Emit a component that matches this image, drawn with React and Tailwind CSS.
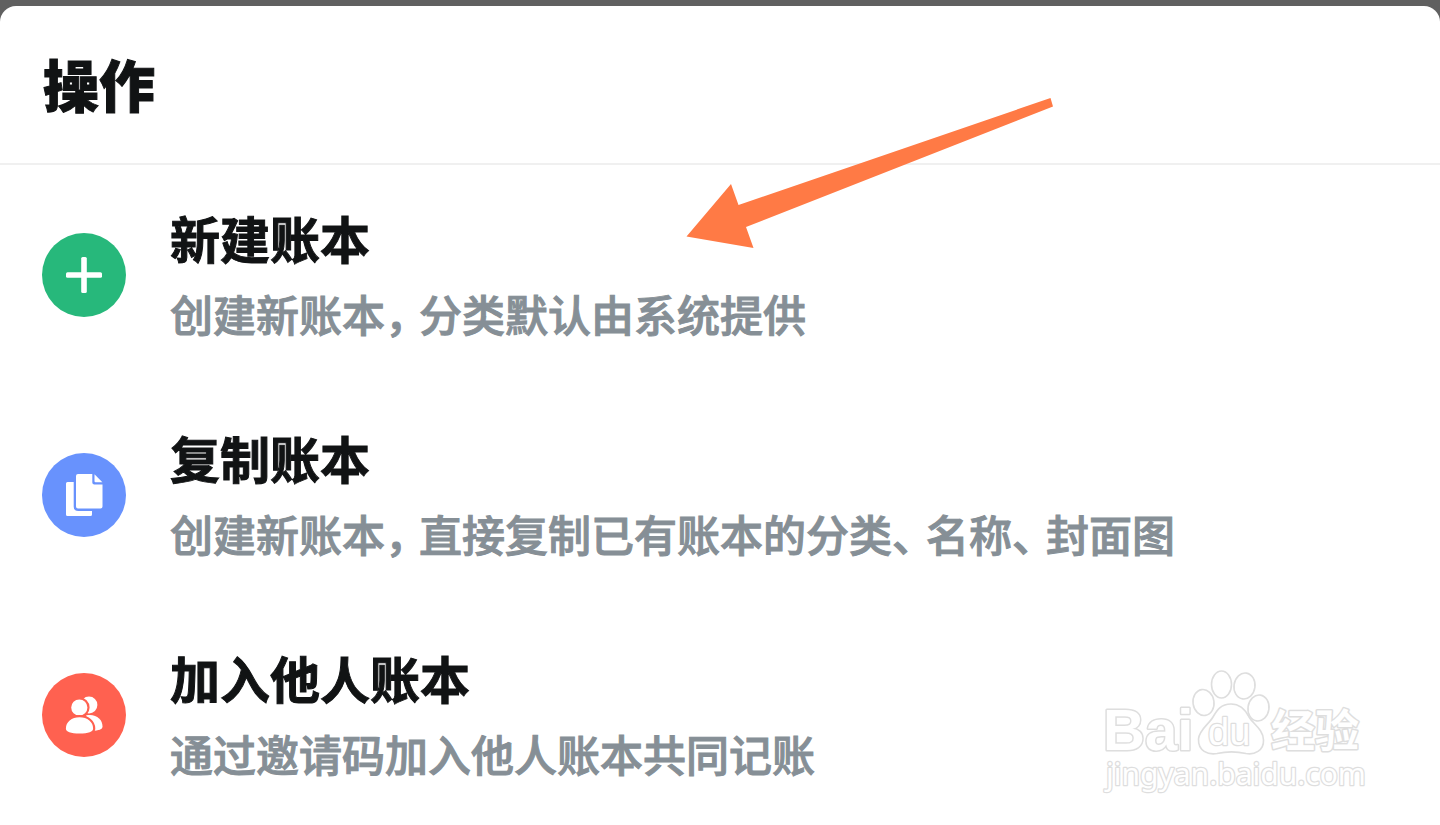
import React from "react";

const PUNCTUATION = /([，、])/;

function PlusIcon() {
  return (
    <svg viewBox="0 0 84 84" className="size-full" aria-hidden="true">
      <rect x="24" y="39.2" width="36" height="5.6" rx="1.5" fill="#fff" />
      <rect x="39.2" y="24" width="5.6" height="36" rx="1.5" fill="#fff" />
    </svg>
  );
}

function CopyIcon() {
  return (
    <svg viewBox="0 0 84 84" className="size-full" aria-hidden="true">
      <path
        fill="#fff"
        d="M25.500 29H31.700V53.500Q31.700 58 36.200 58H50V61.500Q50 63 48.500 63H25.500Q24 63 24 61.500V30.500Q24 29 25.500 29Z"
      />
      <path
        fill="#fff"
        d="M36 21H50.300V29.500Q50.300 31.500 52.300 31.500H60.500V53.500Q60.500 55.500 58.500 55.500H36Q34 55.500 34 53.500V23Q34 21 36 21Z"
      />
      <path fill="#fff" d="M52.500 21.300L60.400 29.200H53.500Q52.500 29.200 52.500 28.200Z" />
    </svg>
  );
}

function PeopleIcon() {
  return (
    <svg viewBox="0 0 84 84" className="size-full" aria-hidden="true">
      <g fill="#fff">
        <circle cx="47" cy="32" r="8.400" />
        <path d="M44 42.500C54 40.500 60.500 46.500 60.500 53.500C60.500 56.500 57 57.500 50 57.800Z" />
      </g>
      <g fill="#fff" stroke="#ff6150" strokeWidth="2.200">
        <circle cx="37.300" cy="34.500" r="9.200" />
        <path d="M37.500 43.200C46 43.200 52.200 48.500 52.200 55.500C52.200 60 46 61.600 37.500 61.600C29 61.600 22.800 60 22.800 55.500C22.800 48.500 29 43.200 37.500 43.200Z" />
      </g>
    </svg>
  );
}

const ACTIONS = [
  {
    title: "新建账本",
    description: "创建新账本，分类默认由系统提供",
    badge: "bg-[#27b87b]",
    Icon: PlusIcon,
  },
  {
    title: "复制账本",
    description: "创建新账本，直接复制已有账本的分类、名称、封面图",
    badge: "bg-[#6892fd]",
    Icon: CopyIcon,
  },
  {
    title: "加入他人账本",
    description: "通过邀请码加入他人账本共同记账",
    badge: "bg-[#ff6150]",
    Icon: PeopleIcon,
  },
];

function Description({ text }) {
  return (
    <span className="block text-[43px] leading-18 font-medium whitespace-nowrap text-[#868f96] [-webkit-text-stroke:1px]">
      {text.split(PUNCTUATION).map((part, i) =>
        PUNCTUATION.test(part) ? (
          <span key={i} className="inline-block w-[34px] [font-feature-settings:'halt']">
            {part}
          </span>
        ) : (
          part
        )
      )}
    </span>
  );
}

function ActionRow({ title, description, badge, Icon }) {
  return (
    <li>
      <button type="button" className="flex h-55 w-full items-center gap-11 px-[42px] text-left">
        <span className={`size-21 shrink-0 rounded-full ${badge}`}>
          <Icon />
        </span>
        <span className="block pb-1">
          <span className="block text-[50px] leading-20 font-bold whitespace-nowrap [-webkit-text-stroke:1px]">
            {title}
          </span>
          <Description text={description} />
        </span>
      </button>
    </li>
  );
}

function Arrow() {
  return (
    <svg
      viewBox="686 97 368 152"
      className="pointer-events-none absolute top-[97px] left-[686px] h-[152px] w-[368px]"
      aria-hidden="true"
    >
      <polygon
        fill="#ff7a45"
        points="686.5,236.5 731,184 738.500,205 1050.500,98 1053,106.500 746,227 753.500,248"
      />
    </svg>
  );
}

function Watermark() {
  return (
    <svg
      viewBox="0 0 270 136"
      className="pointer-events-none absolute right-[70px] bottom-[25px] h-[136px] w-[270px]"
      role="img"
      aria-label="Baidu 经验"
    >
      <g fill="#fff" stroke="#dedede" strokeWidth="1.600" strokeLinejoin="round">
        <text x="3" y="86" fontFamily="Liberation Sans" fontWeight="700" fontSize="58" strokeWidth="3" paintOrder="stroke">
          Bai
        </text>
        <ellipse cx="103.500" cy="38.500" rx="10.500" ry="13" transform="rotate(-8 103.500 38.500)" />
        <ellipse cx="121.500" cy="20.500" rx="10" ry="13.500" />
        <ellipse cx="144.500" cy="22" rx="10.500" ry="13" transform="rotate(8 144.500 22)" />
        <ellipse cx="158.500" cy="44" rx="10.500" ry="13" transform="rotate(8 158.500 44)" />
        <path d="M131 40C141 40 146 47 149 53C153 60 163 65 163.500 76C164 87 154 91 146 89.500C137 87.500 126 87.500 117 89.500C108 91 98 87 98.500 75C99 66 109 60 113 53C117 46 121 40 131 40Z" />
        <text x="108" y="81" fontFamily="Liberation Sans" fontSize="38" strokeWidth="2.500" paintOrder="stroke">
          du
        </text>
        <text x="171" y="83" fontFamily="Noto Sans CJK SC" fontWeight="700" fontSize="44" strokeWidth="3" paintOrder="stroke">
          经验
        </text>
        <text x="6" y="121" fontFamily="Noto Sans" fontSize="30" strokeWidth="2.500" paintOrder="stroke">
          jingyan.baidu.com
        </text>
      </g>
    </svg>
  );
}

export default function App() {
  return (
    <div className="relative min-h-screen bg-[#606060] pt-1.5 font-['Noto_Sans_CJK_SC',sans-serif] text-[#111314]">
      <main className="rounded-t-2xl bg-white">
        <header className="flex h-[159px] items-center border-b-2 border-[#f0f0f0] px-[43px] pb-1">
          <h1 className="text-[56px] leading-20 font-black [-webkit-text-stroke:1px]">操作</h1>
        </header>
        <ul>
          {ACTIONS.map((action) => (
            <ActionRow key={action.title} {...action} />
          ))}
        </ul>
      </main>
      <Arrow />
      <Watermark />
    </div>
  );
}
